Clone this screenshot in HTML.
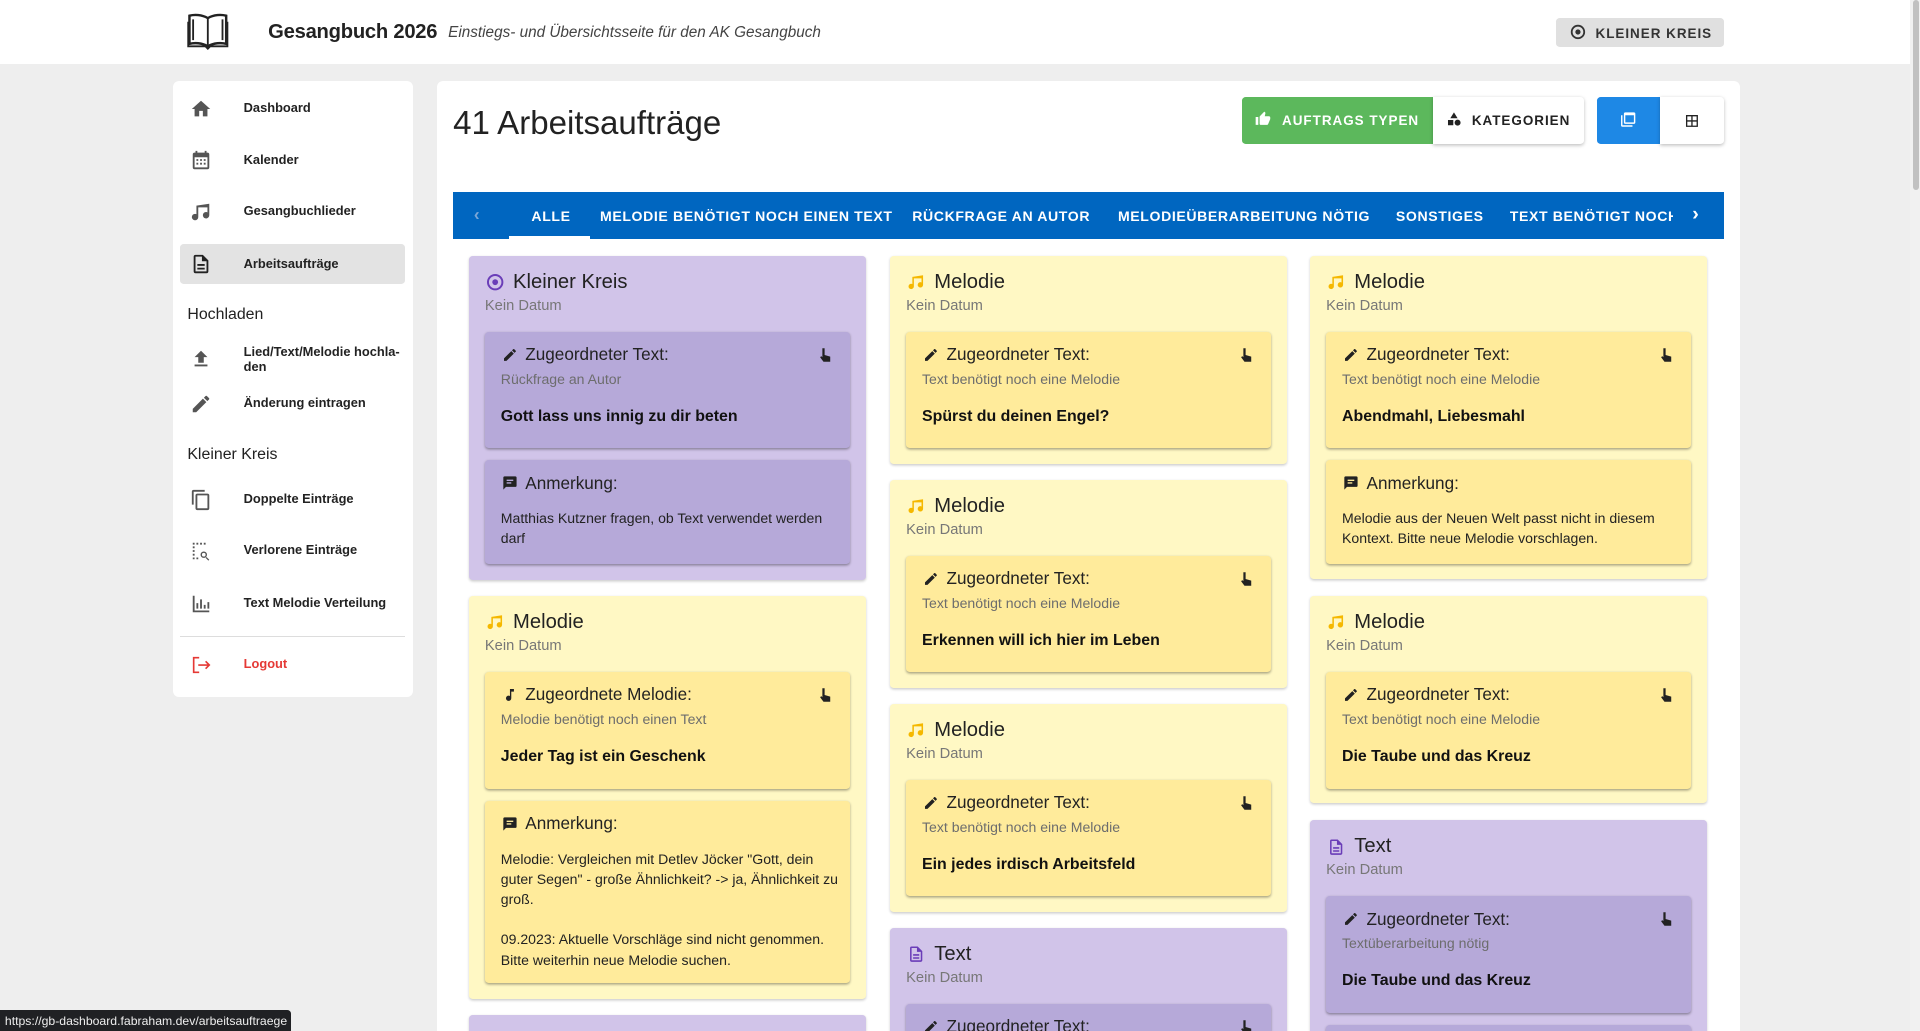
<!DOCTYPE html>
<html><head><meta charset="utf-8"><style>
html{zoom:1.2245;overflow:hidden}
*{box-sizing:border-box;margin:0;padding:0}
body{width:1568px;height:842px;overflow:hidden;background:#eeeeee;font-family:"Liberation Sans",sans-serif;color:#222}
#root{position:relative;width:1568px;height:842px;overflow:hidden;background:#eeeeee}
.hdr{position:absolute;left:0;top:0;width:1560px;height:52px;background:#fff}
.abs{position:absolute}
.sb{position:absolute;left:141px;top:66px;width:196px;height:503px;background:#fff;border-radius:5px}
.it{position:absolute;left:0;width:196px;font-size:10.5px;font-weight:bold;color:#222}
.it .ic{position:absolute;left:14px;width:18px;height:18px}
.it span{position:absolute;left:58px}
.main{position:absolute;left:357px;top:66px;width:1064px;height:776px;background:#fff;border-radius:5px 5px 0 0}
.tabs{position:absolute;left:370px;top:157px;width:1038px;height:38px;background:#0066c0;color:#fff;font-size:11.5px;font-weight:bold;letter-spacing:.5px}
.tabs span{position:absolute;top:13px}
.card{position:absolute;width:324px;border-radius:3px;box-shadow:0 1px 2px rgba(0,0,0,.2);overflow:hidden}
.p{background:#d1c4e9}.y{background:#fff8c4}
.card .t{position:absolute;left:36px;top:12px;font-size:16.5px}
.card .ti{position:absolute;left:14px;top:14px;width:15px;height:15px}
.card .d{position:absolute;left:13px;top:34px;font-size:12px;color:#777}
.in{position:absolute;left:13px;width:298px;border-radius:3px;box-shadow:0 1px 2px rgba(0,0,0,.35)}
.p .in{background:#b6a9d9}.y .in{background:#ffeb9b}
.in .h{position:absolute;left:33px;top:10px;font-size:14px}
.in .hi{position:absolute;left:14px;top:12px;width:13px;height:13px}
.in .s{position:absolute;left:13px;top:32px;font-size:11.5px;color:#6d6d6d}
.in .b{position:absolute;left:13px;top:62px;font-size:13px;font-weight:bold;color:#111}
.in .n{position:absolute;left:13px;top:39px;width:280px;font-size:11.5px;line-height:16.5px;color:#222}
.hand{position:absolute;right:14px;top:12px;width:11px;height:13px}
</style></head><body><div id="root">
<div class="hdr">
<svg class="abs" style="left:153px;top:10px" width="34" height="31" viewBox="0 0 34 31"><path d="M17 5C12 2 6 2 2 3v23c4-1 10-1 15 2 5-3 11-3 15-2V3C28 2 22 2 17 5z" fill="#fff" stroke="#222" stroke-width="2"/><path d="M17 5v23M5 6v17M29 6v17" stroke="#222" stroke-width="1.5" fill="none"/><path d="M1 8v20h14l2 2 2-2h14V8" stroke="#222" stroke-width="1.5" fill="none"/></svg>
<div class="abs" style="left:219px;top:17px;font-size:16.5px;font-weight:bold;color:#222;letter-spacing:-.2px">Gesangbuch 2026</div>
<div class="abs" style="left:366px;top:20px;font-size:12.5px;font-style:italic;color:#444">Einstiegs- und Übersichtsseite für den AK Gesangbuch</div>
<div class="abs" style="left:1271px;top:15px;width:137px;height:23px;background:#e0e0e0;border-radius:3px;font-size:11px;font-weight:bold;letter-spacing:.8px;color:#333;padding:6px 0 0 32px">KLEINER KREIS</div>
<svg class="abs" style="left:1282px;top:20px" width="13" height="13" viewBox="0 0 14 14"><circle cx="7" cy="7" r="5.5" fill="none" stroke="#333" stroke-width="1.6"/><circle cx="7" cy="7" r="2.3" fill="#333"/></svg>
</div>
<div class="abs" style="left:1560px;top:0;width:8px;height:842px;background:#f1f1f1"></div>
<div class="abs" style="left:1562px;top:0;width:5px;height:155px;background:#c1c1c1;border-radius:3px"></div>

<div class="sb">
<div class="it" style="top:14px"><svg class="ic" viewBox="0 0 24 24"><path d="M10 20v-6h4v6h5v-8h3L12 3 2 12h3v8z" fill="#555"/></svg><span style="top:2px">Dashboard</span></div>
<div class="it" style="top:56px"><svg class="ic" viewBox="0 0 24 24"><path d="M19 4h-1V2h-2v2H8V2H6v2H5a2 2 0 00-2 2v14a2 2 0 002 2h14a2 2 0 002-2V6a2 2 0 00-2-2zm0 16H5V9h14zM7 11h2v2H7zm4 0h2v2h-2zm4 0h2v2h-2zm-8 4h2v2H7zm4 0h2v2h-2zm4 0h2v2h-2z" fill="#555"/></svg><span style="top:2px">Kalender</span></div>
<div class="it" style="top:98px"><svg class="ic" viewBox="0 0 24 24"><path d="M21 3v12.5a3.5 3.5 0 11-2-3.15V7H9v10.5A3.5 3.5 0 117 14.35V5z" fill="#555"/></svg><span style="top:2px">Gesangbuchlieder</span></div>
<div class="abs" style="left:6px;top:133px;width:184px;height:33px;background:#e3e3e3;border-radius:3px"></div>
<div class="it" style="top:141px"><svg class="ic" viewBox="0 0 24 24"><path d="M14 2H6a2 2 0 00-2 2v16a2 2 0 002 2h12a2 2 0 002-2V8zm4 18H6V4h7v5h5zM8 12h8v2H8zm0 4h8v2H8z" fill="#222"/></svg><span style="top:2px">Arbeitsaufträge</span></div>
<div class="abs" style="left:12px;top:184px;font-size:13px;color:#222">Hochladen</div>
<div class="it" style="top:218px"><svg class="ic" viewBox="0 0 24 24"><path d="M9 16h6v-6h4l-7-7-7 7h4zm-4 2h14v2H5z" fill="#555"/></svg><span style="top:-3px;line-height:12.5px">Lied/Text/Melodie hochla-<br>den</span></div>
<div class="it" style="top:255px"><svg class="ic" viewBox="0 0 24 24"><path d="M3 17.25V21h3.75L17.81 9.94l-3.75-3.75zM20.71 7.04a1 1 0 000-1.41l-2.34-2.34a1 1 0 00-1.41 0l-1.83 1.83 3.75 3.75z" fill="#555"/></svg><span style="top:2px">Änderung eintragen</span></div>
<div class="abs" style="left:12px;top:298px;font-size:13px;color:#222">Kleiner Kreis</div>
<div class="it" style="top:333px"><svg class="ic" viewBox="0 0 24 24"><path d="M16 1H4a2 2 0 00-2 2v14h2V3h12zm3 4H8a2 2 0 00-2 2v14a2 2 0 002 2h11a2 2 0 002-2V7a2 2 0 00-2-2zm0 16H8V7h11z" fill="#555"/></svg><span style="top:2px">Doppelte Einträge</span></div>
<div class="it" style="top:375px"><svg class="ic" viewBox="0 0 24 24"><path d="M3 3h2v2H3zm4 0h2v2H7zm4 0h2v2h-2zm4 0h2v2h-2zM3 7h2v2H3zm0 4h2v2H3zm0 4h2v2H3zm0 4h2v2H3zm4 0h2v2H7zm8-6.5a3.5 3.5 0 103.5 3.5 3.5 3.5 0 00-3.5-3.5zm0 5.5a2 2 0 112-2 2 2 0 01-2 2zm3 .5l3 3-1 1-3-3z" fill="#555"/></svg><span style="top:2px">Verlorene Einträge</span></div>
<div class="it" style="top:418px"><svg class="ic" viewBox="0 0 24 24"><path d="M3 3h2v16h16v2H3zm4 8h2v6H7zm4-4h2v10h-2zm4 6h2v4h-2zm4-3h2v7h-2z" fill="#555"/></svg><span style="top:2px">Text Melodie Verteilung</span></div>
<div class="abs" style="left:6px;top:453px;width:184px;height:1px;background:#ddd"></div>
<div class="it" style="top:468px;color:#e53935"><svg class="ic" viewBox="0 0 24 24"><path d="M10 4H4v16h6M9 12h12M17 8l4 4-4 4" fill="none" stroke="#e53935" stroke-width="1.8"/></svg><span style="top:2px">Logout</span></div>
</div>

<div class="main"></div>
<div class="abs" style="left:370px;top:86px;font-size:27px;color:#222">41 Arbeitsaufträge</div>
<div class="abs" style="left:1014px;top:79px;width:156px;height:39px;background:#5cb85c;border-radius:3px 0 0 3px;color:#fff;font-size:11px;font-weight:bold;letter-spacing:.8px;padding:13px 0 0 33px">AUFTRAGS TYPEN</div>
<svg class="abs" style="left:1025px;top:91px" width="13" height="13" viewBox="0 0 24 24"><path d="M1 21h4V9H1zm22-11a2 2 0 00-2-2h-6.3l1-4.6V3a1.5 1.5 0 00-.4-1L14 1 7.6 7.6A2 2 0 007 9v10a2 2 0 002 2h9a2 2 0 001.8-1.2l3-7.1A2 2 0 0023 12z" fill="#fff"/></svg>
<div class="abs" style="left:1170px;top:79px;width:124px;height:39px;background:#fff;box-shadow:0 1px 3px rgba(0,0,0,.25);border-radius:0 3px 3px 0;color:#222;font-size:11px;font-weight:bold;letter-spacing:.8px;padding:13px 0 0 32px">KATEGORIEN</div>
<svg class="abs" style="left:1181px;top:91px" width="13" height="13" viewBox="0 0 24 24"><path d="M12 2l-5.5 9h11zM17.5 13a4.5 4.5 0 100 9 4.5 4.5 0 000-9zM3 13.5h8v8H3z" fill="#222"/></svg>
<div class="abs" style="left:1304px;top:79px;width:52px;height:39px;background:#1e88e5;border-radius:3px 0 0 3px"></div>
<svg class="abs" style="left:1322px;top:91px" width="15" height="14" viewBox="0 0 24 24"><path d="M4 6H2v14a2 2 0 002 2h14v-2H4zm16-4H8a2 2 0 00-2 2v12a2 2 0 002 2h12a2 2 0 002-2V4a2 2 0 00-2-2zm0 14H8V6h12z" fill="#fff"/></svg>
<div class="abs" style="left:1356px;top:79px;width:52px;height:39px;background:#fff;box-shadow:0 1px 3px rgba(0,0,0,.25);border-radius:0 3px 3px 0"></div>
<svg class="abs" style="left:1375px;top:92px" width="13" height="13" viewBox="0 0 24 24"><path d="M3 3v18h18V3zm8 16H5v-6h6zm0-8H5V5h6zm8 8h-6v-6h6zm0-8h-6V5h6z" fill="#222"/></svg>

<div class="tabs">
<span style="left:17px;font-size:14px;top:10px;color:#7aa6d6">‹</span>
<span style="left:64px">ALLE</span>
<div class="abs" style="left:46px;top:36px;width:66px;height:2px;background:#fff"></div>
<span style="left:120px">MELODIE BENÖTIGT NOCH EINEN TEXT</span>
<span style="left:375px">RÜCKFRAGE AN AUTOR</span>
<span style="left:543px">MELODIEÜBERARBEITUNG NÖTIG</span>
<span style="left:770px">SONSTIGES</span>
<span style="left:863px;width:133px;overflow:hidden;white-space:nowrap">TEXT BENÖTIGT NOCH EINE MELODIE</span>
<span style="left:1012px;font-size:16px;top:9px">›</span>
</div>

<!-- column 1 -->
<div class="card p" style="left:383px;top:209px;height:265px">
<svg class="ti" viewBox="0 0 14 14"><circle cx="7" cy="7" r="5.5" fill="none" stroke="#6a3db8" stroke-width="1.5"/><circle cx="7" cy="7" r="2.2" fill="#6a3db8"/></svg>
<div class="t">Kleiner Kreis</div><div class="d">Kein Datum</div>
<div class="in" style="top:62px;height:95px"><svg class="hi" viewBox="0 0 24 24"><path d="M3 17.25V21h3.75L17.81 9.94l-3.75-3.75zM20.71 7.04a1 1 0 000-1.41l-2.34-2.34a1 1 0 00-1.41 0l-1.83 1.83 3.75 3.75z" fill="#222"/></svg><div class="h">Zugeordneter Text:</div><svg class="hand" viewBox="0 0 12 14"><path d="M3 1h2v6l5 1.5V13H4L1 9l1-1 1 1z" fill="#222"/></svg><div class="s">Rückfrage an Autor</div><div class="b">Gott lass uns innig zu dir beten</div></div>
<div class="in" style="top:167px;height:85px"><svg class="hi" viewBox="0 0 24 24"><path d="M20 2H4a2 2 0 00-2 2v18l4-4h14a2 2 0 002-2V4a2 2 0 00-2-2zM7 7h10v2H7zm0 4h7v2H7z" fill="#222"/></svg><div class="h">Anmerkung:</div><div class="n">Matthias Kutzner fragen, ob Text verwendet werden darf</div></div>
</div>

<div class="card y" style="left:383px;top:487px;height:329px">
<svg class="ti" viewBox="0 0 24 24"><path d="M21 3v12.5a3.5 3.5 0 11-2-3.15V7H9v10.5A3.5 3.5 0 117 14.35V5z" fill="#f5b800"/></svg>
<div class="t">Melodie</div><div class="d">Kein Datum</div>
<div class="in" style="top:62px;height:95px"><svg class="hi" viewBox="0 0 24 24"><path d="M12 3v10.55A4 4 0 1014 17V7h4V3z" fill="#222"/></svg><div class="h">Zugeordnete Melodie:</div><svg class="hand" viewBox="0 0 12 14"><path d="M3 1h2v6l5 1.5V13H4L1 9l1-1 1 1z" fill="#222"/></svg><div class="s">Melodie benötigt noch einen Text</div><div class="b">Jeder Tag ist ein Geschenk</div></div>
<div class="in" style="top:167px;height:149px"><svg class="hi" viewBox="0 0 24 24"><path d="M20 2H4a2 2 0 00-2 2v18l4-4h14a2 2 0 002-2V4a2 2 0 00-2-2zM7 7h10v2H7zm0 4h7v2H7z" fill="#222"/></svg><div class="h">Anmerkung:</div><div class="n">Melodie: Vergleichen mit Detlev Jöcker "Gott, dein guter Segen" - große Ähnlichkeit? -&gt; ja, Ähnlichkeit zu groß.<br><br>09.2023: Aktuelle Vorschläge sind nicht genommen. Bitte weiterhin neue Melodie suchen.</div></div>
</div>
<div class="card p" style="left:383px;top:829px;height:13px;border-radius:3px 3px 0 0"></div>

<!-- column 2 -->
<div class="card y" style="left:727px;top:209px;height:170px">
<svg class="ti" viewBox="0 0 24 24"><path d="M21 3v12.5a3.5 3.5 0 11-2-3.15V7H9v10.5A3.5 3.5 0 117 14.35V5z" fill="#f5b800"/></svg>
<div class="t">Melodie</div><div class="d">Kein Datum</div>
<div class="in" style="top:62px;height:95px"><svg class="hi" viewBox="0 0 24 24"><path d="M3 17.25V21h3.75L17.81 9.94l-3.75-3.75zM20.71 7.04a1 1 0 000-1.41l-2.34-2.34a1 1 0 00-1.41 0l-1.83 1.83 3.75 3.75z" fill="#222"/></svg><div class="h">Zugeordneter Text:</div><svg class="hand" viewBox="0 0 12 14"><path d="M3 1h2v6l5 1.5V13H4L1 9l1-1 1 1z" fill="#222"/></svg><div class="s">Text benötigt noch eine Melodie</div><div class="b">Spürst du deinen Engel?</div></div>
</div>
<div class="card y" style="left:727px;top:392px;height:170px">
<svg class="ti" viewBox="0 0 24 24"><path d="M21 3v12.5a3.5 3.5 0 11-2-3.15V7H9v10.5A3.5 3.5 0 117 14.35V5z" fill="#f5b800"/></svg>
<div class="t">Melodie</div><div class="d">Kein Datum</div>
<div class="in" style="top:62px;height:95px"><svg class="hi" viewBox="0 0 24 24"><path d="M3 17.25V21h3.75L17.81 9.94l-3.75-3.75zM20.71 7.04a1 1 0 000-1.41l-2.34-2.34a1 1 0 00-1.41 0l-1.83 1.83 3.75 3.75z" fill="#222"/></svg><div class="h">Zugeordneter Text:</div><svg class="hand" viewBox="0 0 12 14"><path d="M3 1h2v6l5 1.5V13H4L1 9l1-1 1 1z" fill="#222"/></svg><div class="s">Text benötigt noch eine Melodie</div><div class="b">Erkennen will ich hier im Leben</div></div>
</div>
<div class="card y" style="left:727px;top:575px;height:170px">
<svg class="ti" viewBox="0 0 24 24"><path d="M21 3v12.5a3.5 3.5 0 11-2-3.15V7H9v10.5A3.5 3.5 0 117 14.35V5z" fill="#f5b800"/></svg>
<div class="t">Melodie</div><div class="d">Kein Datum</div>
<div class="in" style="top:62px;height:95px"><svg class="hi" viewBox="0 0 24 24"><path d="M3 17.25V21h3.75L17.81 9.94l-3.75-3.75zM20.71 7.04a1 1 0 000-1.41l-2.34-2.34a1 1 0 00-1.41 0l-1.83 1.83 3.75 3.75z" fill="#222"/></svg><div class="h">Zugeordneter Text:</div><svg class="hand" viewBox="0 0 12 14"><path d="M3 1h2v6l5 1.5V13H4L1 9l1-1 1 1z" fill="#222"/></svg><div class="s">Text benötigt noch eine Melodie</div><div class="b">Ein jedes irdisch Arbeitsfeld</div></div>
</div>
<div class="card p" style="left:727px;top:758px;height:84px;border-radius:3px 3px 0 0">
<svg class="ti" viewBox="0 0 24 24"><path d="M14 2H6a2 2 0 00-2 2v16a2 2 0 002 2h12a2 2 0 002-2V8zm4 18H6V4h7v5h5zM8 12h8v2H8zm0 4h8v2H8z" fill="#6a3db8"/></svg>
<div class="t">Text</div><div class="d">Kein Datum</div>
<div class="in" style="top:62px;height:22px;overflow:hidden;border-radius:3px 3px 0 0"><svg class="hi" viewBox="0 0 24 24"><path d="M3 17.25V21h3.75L17.81 9.94l-3.75-3.75zM20.71 7.04a1 1 0 000-1.41l-2.34-2.34a1 1 0 00-1.41 0l-1.83 1.83 3.75 3.75z" fill="#222"/></svg><div class="h">Zugeordneter Text:</div><svg class="hand" viewBox="0 0 12 14"><path d="M3 1h2v6l5 1.5V13H4L1 9l1-1 1 1z" fill="#222"/></svg></div>
</div>

<!-- column 3 -->
<div class="card y" style="left:1070px;top:209px;height:264px">
<svg class="ti" viewBox="0 0 24 24"><path d="M21 3v12.5a3.5 3.5 0 11-2-3.15V7H9v10.5A3.5 3.5 0 117 14.35V5z" fill="#f5b800"/></svg>
<div class="t">Melodie</div><div class="d">Kein Datum</div>
<div class="in" style="top:62px;height:95px"><svg class="hi" viewBox="0 0 24 24"><path d="M3 17.25V21h3.75L17.81 9.94l-3.75-3.75zM20.71 7.04a1 1 0 000-1.41l-2.34-2.34a1 1 0 00-1.41 0l-1.83 1.83 3.75 3.75z" fill="#222"/></svg><div class="h">Zugeordneter Text:</div><svg class="hand" viewBox="0 0 12 14"><path d="M3 1h2v6l5 1.5V13H4L1 9l1-1 1 1z" fill="#222"/></svg><div class="s">Text benötigt noch eine Melodie</div><div class="b">Abendmahl, Liebesmahl</div></div>
<div class="in" style="top:167px;height:85px"><svg class="hi" viewBox="0 0 24 24"><path d="M20 2H4a2 2 0 00-2 2v18l4-4h14a2 2 0 002-2V4a2 2 0 00-2-2zM7 7h10v2H7zm0 4h7v2H7z" fill="#222"/></svg><div class="h">Anmerkung:</div><div class="n">Melodie aus der Neuen Welt passt nicht in diesem Kontext. Bitte neue Melodie vorschlagen.</div></div>
</div>
<div class="card y" style="left:1070px;top:487px;height:169px">
<svg class="ti" viewBox="0 0 24 24"><path d="M21 3v12.5a3.5 3.5 0 11-2-3.15V7H9v10.5A3.5 3.5 0 117 14.35V5z" fill="#f5b800"/></svg>
<div class="t">Melodie</div><div class="d">Kein Datum</div>
<div class="in" style="top:62px;height:95px"><svg class="hi" viewBox="0 0 24 24"><path d="M3 17.25V21h3.75L17.81 9.94l-3.75-3.75zM20.71 7.04a1 1 0 000-1.41l-2.34-2.34a1 1 0 00-1.41 0l-1.83 1.83 3.75 3.75z" fill="#222"/></svg><div class="h">Zugeordneter Text:</div><svg class="hand" viewBox="0 0 12 14"><path d="M3 1h2v6l5 1.5V13H4L1 9l1-1 1 1z" fill="#222"/></svg><div class="s">Text benötigt noch eine Melodie</div><div class="b">Die Taube und das Kreuz</div></div>
</div>
<div class="card p" style="left:1070px;top:670px;height:172px;border-radius:3px 3px 0 0">
<svg class="ti" viewBox="0 0 24 24"><path d="M14 2H6a2 2 0 00-2 2v16a2 2 0 002 2h12a2 2 0 002-2V8zm4 18H6V4h7v5h5zM8 12h8v2H8zm0 4h8v2H8z" fill="#6a3db8"/></svg>
<div class="t">Text</div><div class="d">Kein Datum</div>
<div class="in" style="top:62px;height:95px"><svg class="hi" viewBox="0 0 24 24"><path d="M3 17.25V21h3.75L17.81 9.94l-3.75-3.75zM20.71 7.04a1 1 0 000-1.41l-2.34-2.34a1 1 0 00-1.41 0l-1.83 1.83 3.75 3.75z" fill="#222"/></svg><div class="h">Zugeordneter Text:</div><svg class="hand" viewBox="0 0 12 14"><path d="M3 1h2v6l5 1.5V13H4L1 9l1-1 1 1z" fill="#222"/></svg><div class="s">Textüberarbeitung nötig</div><div class="b">Die Taube und das Kreuz</div></div>
<div class="in" style="top:167px;height:5px;border-radius:3px 3px 0 0"></div>
</div>

<div class="abs" style="left:0;top:825px;width:238px;height:17px;background:#202124;color:#eee;font-size:10px;padding:3px 0 0 4px;border-radius:0 3px 0 0">https://gb-dashboard.fabraham.dev/arbeitsauftraege</div>
</div></body></html>
